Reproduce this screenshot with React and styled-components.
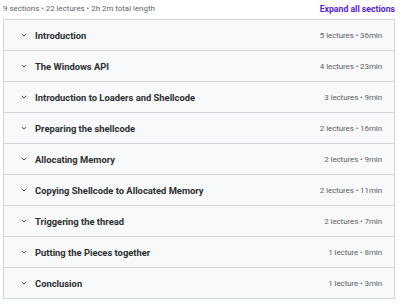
import React from "react";
import styled, { createGlobalStyle } from "styled-components";

const sections = [
  ["Introduction", "5 lectures • 36min"],
  ["The Windows API", "4 lectures • 23min"],
  ["Introduction to Loaders and Shellcode", "3 lectures • 9min"],
  ["Preparing the shellcode", "2 lectures • 16min"],
  ["Allocating Memory", "2 lectures • 9min"],
  ["Copying Shellcode to Allocated Memory", "2 lectures • 11min"],
  ["Triggering the thread", "2 lectures • 7min"],
  ["Putting the Pieces together", "1 lecture • 8min"],
  ["Conclusion", "1 lecture • 3min"],
];

const GlobalStyle = createGlobalStyle`
  body {
    margin: 0;
    background: #fff;
    font-family: Roboto, "Noto Sans", sans-serif;
    color: #2d2f31;
  }
`;

function Chevron() {
  return (
    <svg width="8" height="8" viewBox="0 0 8 8">
      <path d="M1.8 3 L4 5 L6.2 3" fill="none" stroke="#2d2f31" strokeWidth="0.9" />
    </svg>
  );
}

function App() {
  return (
    <>
      <GlobalStyle />
      <Wrapper>
        <Header>
          <span className="summary">9 sections • 22 lectures • 2h 2m total length</span>
          <span className="expand">Expand all sections</span>
        </Header>
        <Panel>
          {sections.map(([title, meta]) => (
            <Row key={title}>
              <div className="left">
                <Chevron />
                <span className="title">{title}</span>
              </div>
              <span className="meta">{meta}</span>
            </Row>
          ))}
        </Panel>
      </Wrapper>
    </>
  );
}

export default App;

const Wrapper = styled.div`
  padding: 0 5px 0 3px;
`;

const Header = styled.div`
  display: flex;
  align-items: center;
  justify-content: space-between;
  height: 19px;

  .summary {
    font-size: 7.9px;
    color: #5e6266;
    padding-bottom: 2px;
  }
  .expand {
    font-size: 8.7px;
    font-weight: 700;
    color: #5624d0;
    padding-bottom: 2px;
  }
`;

const Panel = styled.div`
  border: 1px solid #d1d7dc;
`;

const Row = styled.div`
  display: flex;
  align-items: center;
  justify-content: space-between;
  height: 30px;
  padding: 0 12px 0 16px;
  background: #f7f9fa;
  border-bottom: 1px solid #d1d7dc;
  &:last-child {
    border-bottom: none;
  }

  .left {
    display: flex;
    align-items: center;
    gap: 7px;
  }
  .title {
    font-size: 9.4px;
    font-weight: 700;
  }
  .meta {
    font-size: 8px;
    letter-spacing: -0.1px;
    color: #5e6266;
  }
`;
